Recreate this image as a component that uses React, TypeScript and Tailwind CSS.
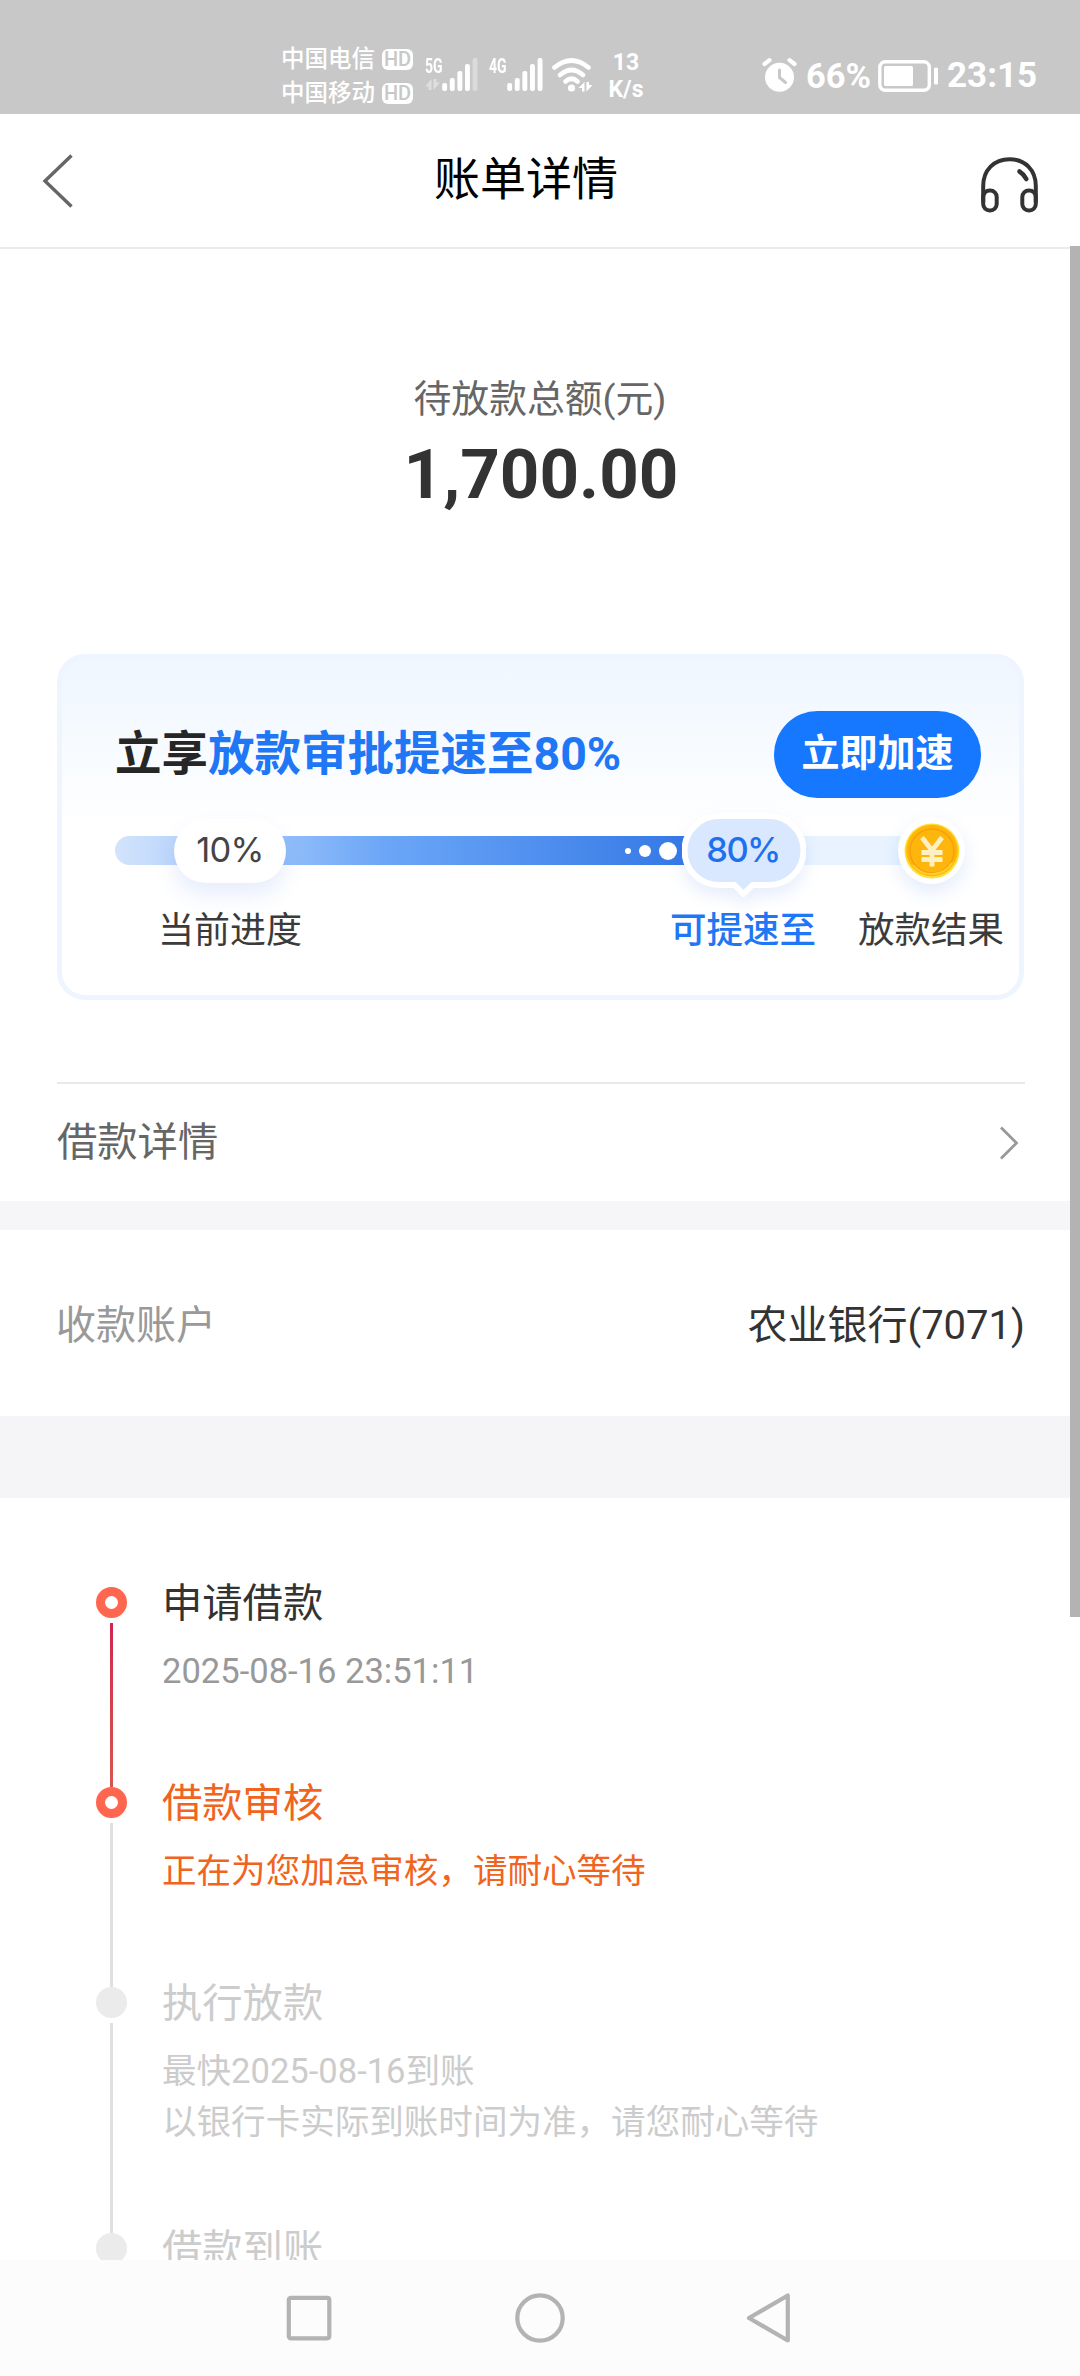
import clsx from "clsx";

type StepState = "done" | "current" | "pending";

type Step = {
  title: string;
  lines: string[];
  state: StepState;
  height: string;
};

const steps: Step[] = [
  { title: "申请借款", lines: ["2025-08-16 23:51:11"], state: "done", height: "h-[200px]" },
  { title: "借款审核", lines: ["正在为您加急审核，请耐心等待"], state: "current", height: "h-[200px]" },
  {
    title: "执行放款",
    lines: ["最快2025-08-16到账", "以银行卡实际到账时间为准，请您耐心等待"],
    state: "pending",
    height: "h-[246px]",
  },
  { title: "借款到账", lines: [], state: "pending", height: "h-[80px]" },
];

const barTops = [25, 20, 13, 6, 0];

function SignalBars({ strength }: { strength: number }) {
  return (
    <svg width="36" height="34" viewBox="0 0 36 34" fill="#fff">
      {barTops.map((top, i) => (
        <rect key={top} x={0.2 + i * 7.6} y={top} width="4.9" height={33 - top} rx="2" opacity={i < strength ? 1 : 0.35} />
      ))}
    </svg>
  );
}

function DataArrows({ className }: { className?: string }) {
  return (
    <svg width="15" height="11" viewBox="0 0 15 11" fill="#fff" className={className}>
      <path d="M6.5 0v11H3.5V7.500H0z" />
      <path d="M8.500 11V0h3v3.500H15z" />
    </svg>
  );
}

function WifiIcon() {
  return (
    <svg width="41" height="34" viewBox="0 0 41 34" fill="none" stroke="#fff" strokeWidth="4.600" strokeLinecap="round">
      <path d="M2.500 9.500Q19.500-4.500 36.500 9.500" />
      <path d="M8 17Q19.500 7 31 17" />
      <path d="M13.500 23.500Q19.500 18 25.500 23.500" />
      <circle cx="19.500" cy="30" r="3.600" fill="#fff" stroke="none" />
      <path d="M32.500 24v9.500h-2.500v-3.500h-3.500zM34.500 33.500v-9.500h2.500v3h3.500z" fill="#fff" stroke="none" />
    </svg>
  );
}

function AlarmIcon() {
  return (
    <svg width="36" height="34" viewBox="0 0 36 34" fill="none" strokeLinecap="round">
      <circle cx="17.500" cy="19.300" r="14.500" fill="#fff" />
      <path d="M2.500 6 7.500 2.200M32.500 6 27.500 2.200" stroke="#fff" strokeWidth="4.200" />
      <path d="M17.500 12v7.500l6 5" stroke="#c8c8c8" strokeWidth="3" />
    </svg>
  );
}

function BatteryIcon() {
  return (
    <svg width="61" height="32" viewBox="0 0 61 32" fill="none">
      <rect x="1.800" y="1.800" width="49.500" height="28.500" rx="5.500" stroke="#fff" strokeWidth="3.400" />
      <rect x="6" y="6" width="29" height="20" rx="1.500" fill="#fff" />
      <rect x="56" y="7.500" width="4" height="17" rx="1.500" fill="#fff" />
    </svg>
  );
}

function Carrier({ name }: { name: string }) {
  return (
    <div className="flex h-[34px] items-center gap-[7px]">
      <span className="text-[23.5px] leading-[34px] font-medium">{name}</span>
      <span className="flex h-[21px] w-[31px] items-center justify-center rounded-[6px] bg-white text-[20px] leading-[21px] font-medium text-[#c8c8c8]">
        HD
      </span>
    </div>
  );
}

function StatusBar() {
  return (
    <div className="flex h-[114px] shrink-0 items-start bg-[#c8c8c8] pl-[281px] text-white">
      <div className="mt-[42px] flex w-[132px] flex-col">
        <Carrier name="中国电信" />
        <Carrier name="中国移动" />
      </div>
      <div className="mt-[58px] ml-[12px] flex w-[17px] flex-col">
        <span className="w-[26px] origin-left scale-x-[0.7] text-[20px] leading-[16px] font-bold">5G</span>
        <DataArrows className="mt-[5px] opacity-40" />
      </div>
      <div className="mt-[58px] w-[36px]">
        <SignalBars strength={4} />
      </div>
      <div className="mt-[58px] ml-[11px] w-[18px]">
        <span className="block w-[26px] origin-left scale-x-[0.7] text-[20px] leading-[16px] font-bold">4G</span>
      </div>
      <div className="mt-[58px] w-[36px]">
        <SignalBars strength={5} />
      </div>
      <div className="mt-[58px] ml-[9px]">
        <WifiIcon />
      </div>
      <div className="mt-[49px] ml-[12px] w-[42px] text-center text-[23px] leading-[27px] font-bold">
        <p>13</p>
        <p>K/s</p>
      </div>
      <div className="mt-[58px] ml-[115px]">
        <AlarmIcon />
      </div>
      <span className="mt-[56px] ml-[8px] w-[66px] text-[34.500px] leading-[40px] font-bold">66%</span>
      <div className="mt-[60px] ml-[6px]">
        <BatteryIcon />
      </div>
      <span className="mt-[56px] ml-[8px] text-[35px] leading-[40px] font-bold">23:15</span>
    </div>
  );
}

function Header() {
  return (
    <header className="flex h-[135px] shrink-0 items-start border-b-2 border-[#ebebeb] bg-white pl-[41px]">
      <svg width="33" height="54" viewBox="0 0 33 54" fill="none" stroke="#666" strokeWidth="3.400" className="mt-[40px]">
        <path d="M30.500 1.500 4 27l26.500 25.500" />
      </svg>
      <h1 className="mt-[33px] ml-[360px] w-[184px] text-[46px] leading-[64px] text-black">账单详情</h1>
      <svg width="60" height="58" viewBox="0 0 60 58" fill="none" stroke="#333" strokeWidth="4" className="mt-[42px] ml-[362px]">
        <path d="M3.200 46V30C3.200 14 14 3.200 29.500 3.200S55.800 14 55.800 30v16" />
        <rect x="3.200" y="34.500" width="13.500" height="20" rx="6.500" />
        <rect x="42.300" y="34.500" width="13.500" height="20" rx="6.500" />
        <path d="M39.500 15.500c3 1.800 5 4.200 6.800 7.500" strokeLinecap="round" strokeWidth="4.600" />
      </svg>
    </header>
  );
}

function CoinIcon() {
  return (
    <svg width="56" height="56" viewBox="0 0 56 56" fill="none">
      <circle cx="28" cy="28" r="27.500" fill="#ffdf33" />
      <circle cx="28" cy="27.500" r="25.800" fill="#ffb60c" />
      <circle cx="28" cy="28" r="22" stroke="#f7a00a" strokeWidth="1.600" />
      <path d="M9 42a24 24 0 0 0 39-2" stroke="#ffd02e" strokeWidth="2" />
      <path d="M18 14.500 28 27.500l10-13M28 27v16.500M17.500 29.500h21M17.500 36.500h21" stroke="#fff0c4" strokeWidth="4.800" />
    </svg>
  );
}

function SpeedCard() {
  return (
    <section className="mx-[57px] mt-[136px] h-[346px] w-[967px] shrink-0 rounded-[28px] border-[5px] border-[#eff5ff] bg-linear-to-b from-[#eef6ff] to-white to-50% bg-origin-border">
      <div className="mt-[52px] flex h-[87px] items-center justify-between pr-[38px] pl-[53px]">
        <h2 className="pb-[2px] text-[46.500px] leading-[66px] font-bold text-[#262626]">
          立享<span className="text-[#1f77f5]">放款审批提速至80%</span>
        </h2>
        <button className="h-[87px] w-[207px] rounded-full bg-[#1677ff] pb-[3px] text-[38px] leading-[50px] font-bold text-white">
          立即加速
        </button>
      </div>

      <div className="relative mt-[38px] ml-[53px] flex h-[29px] w-[820px]">
        <div className="h-full w-[600px] rounded-l-full bg-linear-to-r from-[#d3e4fc] via-[#6ba6f7] via-45% to-[#2f74e4]" />
        <div className="h-full w-[220px] bg-[#e8f3ff]" />

        <div className="absolute top-[-17px] left-[59px] flex h-[64px] w-[112px] items-center justify-center rounded-full bg-white pb-[2px] font-['Inter','Noto_Sans_CJK_SC',sans-serif] text-[34.500px] tracking-[-0.8px] text-[#444] shadow-[0_12px_22px_rgba(60,110,230,0.12)]">
          10%
        </div>

        <div className="absolute top-[6px] left-[510px] flex items-center">
          <i className="size-[6px] rounded-full bg-white" />
          <i className="ml-[8px] size-[12px] rounded-full bg-white" />
          <i className="ml-[8px] size-[18px] rounded-full bg-white" />
        </div>

        <svg
          width="124"
          height="88"
          viewBox="0 0 124 88"
          className="absolute top-[-23px] left-[567px] drop-shadow-[0_8px_8px_rgba(60,110,230,0.12)]"
        >
          <path
            d="M37 3H87a34.500 34.500 0 0 1 0 69H70.500L61.500 81l-9-9H37a34.500 34.500 0 0 1 0-69z"
            fill="#d9e8fe"
            stroke="#fff"
            strokeWidth="6"
            strokeLinejoin="round"
          />
        </svg>
        <div className="absolute top-[-17px] left-[572px] flex h-[64px] w-[112px] items-center justify-center pb-[2px] font-['Inter','Noto_Sans_CJK_SC',sans-serif] text-[34.500px] font-medium tracking-[-1.600px] text-[#1f70ee]">
          80%
        </div>

        <div className="absolute top-[-19px] left-[783px] flex size-[67px] items-center justify-center rounded-full bg-white shadow-[0_8px_18px_rgba(60,110,230,0.14)]">
          <CoinIcon />
        </div>
      </div>

      <div className="mt-[40px] ml-[96px] flex text-[36.500px] leading-[52px] whitespace-nowrap text-[#3b3b3b]">
        <span className="w-[146px] text-[36px]">当前进度</span>
        <span className="ml-[366px] w-[146px] font-medium text-[#1f77f5]">可提速至</span>
        <span className="ml-[42px] w-[146px]">放款结果</span>
      </div>
    </section>
  );
}

function TimelineStep({ step, next, last }: { step: Step; next?: StepState; last: boolean }) {
  const active = step.state !== "pending";
  return (
    <li className={clsx("flex", step.height)}>
      <div className="flex w-[31px] flex-col items-center">
        <span
          className={clsx(
            "size-[31px] shrink-0 rounded-full",
            active ? "border-[9.500px] border-[#ff6650] bg-white" : "bg-[#ebebeb]",
          )}
        />
        {!last && (
          <span
            className={clsx(
              "mt-[5px] w-[3px] flex-1",
              next === "current" ? "bg-linear-to-b from-[#cf2450] to-[#d9564c]" : "bg-[#e0e0e0]",
            )}
          />
        )}
      </div>
      <div
        className={clsx(
          "ml-[35px]",
          step.state === "done" && "text-[#333]",
          step.state === "current" && "text-[#f0641e]",
          step.state === "pending" && "text-[#ccc]",
        )}
      >
        <h3 className="-mt-[12px] text-[40.300px] leading-[58px]">{step.title}</h3>
        <div className={clsx("mt-[13px] text-[34.560px] leading-[51px]", step.state === "done" && "text-[#999]")}>
          {step.lines.map((line) => (
            <p key={line}>{line}</p>
          ))}
        </div>
      </div>
    </li>
  );
}

function NavBar() {
  return (
    <nav className="flex h-[116px] shrink-0 items-start bg-[#fcfcfc] pt-[32px] pl-[284px]">
      <svg width="50" height="52" viewBox="0 0 50 52" fill="none" stroke="#b3b3b3" strokeWidth="4.200">
        <rect x="4.800" y="5.800" width="40.500" height="40.500" rx="2" />
      </svg>
      <svg width="52" height="52" viewBox="0 0 52 52" fill="none" stroke="#b3b3b3" strokeWidth="4.200" className="ml-[180px]">
        <circle cx="26" cy="26" r="22.700" />
      </svg>
      <svg width="50" height="52" viewBox="0 0 50 52" fill="none" stroke="#b3b3b3" strokeWidth="4.200" strokeLinejoin="round" className="ml-[178px]">
        <path d="M43.800 3.500v45L5 26z" />
      </svg>
    </nav>
  );
}

export default function App() {
  return (
    <div className="relative flex h-[2376px] w-[1080px] flex-col overflow-hidden bg-white font-['Roboto','Noto_Sans_CJK_SC',sans-serif]">
      <StatusBar />
      <Header />

      <main className="min-h-0 flex-1 overflow-hidden">
        <section className="flex h-[952px] flex-col">
          <div className="pt-[122px] text-center">
            <p className="text-[37.800px] leading-[56px] text-[#666]">待放款总额(元)</p>
            <p className="mt-[6px] mb-[1px] pl-[2px] text-[69.120px] leading-[84px] font-bold text-[#333]">1,700.00</p>
          </div>
          <SpeedCard />
          <div className="mx-[57px] mt-[82px] mr-[55px] flex h-[119px] items-center justify-between border-t-2 border-[#e8e8e8] pr-[6px] text-[40.300px] leading-[58px] text-[#666]">
            <span>借款详情</span>
            <svg width="20" height="34" viewBox="0 0 20 34" fill="none" stroke="#999" strokeWidth="2.800">
              <path d="M2 1.500 17.500 17 2 32.500" />
            </svg>
          </div>
        </section>

        <div className="h-[29px] bg-[#f6f6f8]" />

        <section className="flex h-[186px] items-center justify-between pt-[6px] pr-[55px] pl-[56px] text-[40px] leading-[58px]">
          <span className="text-[#999]">收款账户</span>
          <span className="text-[#333]">农业银行(7071)</span>
        </section>

        <div className="h-[82px] bg-[#f5f5f7]" />

        <ul className="pt-[89px] pl-[96px]">
          {steps.map((step, i) => (
            <TimelineStep key={step.title} step={step} next={steps[i + 1]?.state} last={i === steps.length - 1} />
          ))}
        </ul>
      </main>

      <NavBar />

      <div className="absolute top-[246px] right-0 h-[1371px] w-[10px] bg-[#b3b3b3]" />
    </div>
  );
}
